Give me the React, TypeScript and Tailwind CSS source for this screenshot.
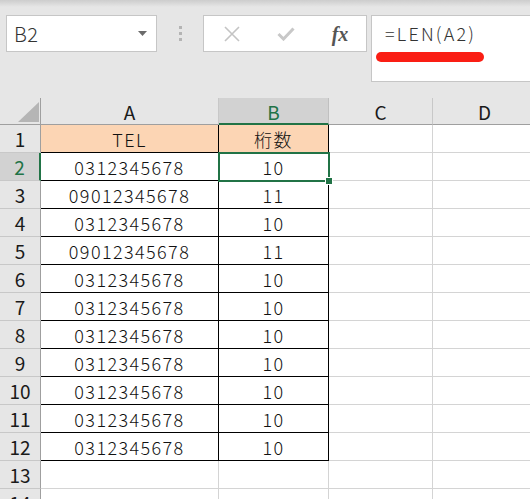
import React from "react";

const FONT = { fontFamily: '"Noto Sans CJK JP", "Noto Sans", sans-serif' };

const data: [string, string][] = [
  ["TEL", "桁数"],
  ["0312345678", "10"],
  ["09012345678", "11"],
  ["0312345678", "10"],
  ["09012345678", "11"],
  ["0312345678", "10"],
  ["0312345678", "10"],
  ["0312345678", "10"],
  ["0312345678", "10"],
  ["0312345678", "10"],
  ["0312345678", "10"],
  ["0312345678", "10"],
];

function TopBar() {
  return (
    <div className="h-[98px] bg-[#e6e6e6] flex flex-col">
      <div className="h-[7px] bg-gradient-to-b from-[#cdcdcd] to-[#e6e6e6]" />
      <div className="flex items-start mt-[8px]">
        <div className="ml-[6px] w-[151px] h-[37px] bg-white border border-[#c6c6c6] flex items-center justify-between pl-[7px] pr-[9px]">
          <span className="text-[20px] text-[#333] font-light leading-none tracking-[0.5px]">B2</span>
          <svg width="9" height="5" viewBox="0 0 9 5"><path d="M0 0 L9 0 L4.5 5 Z" fill="#6b6b6b" /></svg>
        </div>
        <div className="w-[46px] h-[37px] flex flex-col items-center justify-center gap-[3px]">
          <div className="w-[3px] h-[3px] bg-[#b4b4b4]" />
          <div className="w-[3px] h-[3px] bg-[#b4b4b4]" />
          <div className="w-[3px] h-[3px] bg-[#b4b4b4]" />
        </div>
        <div className="w-[164px] h-[37px] bg-white border border-[#c6c6c6] flex items-center">
          <div className="w-[54px] flex justify-center pl-[2px]">
            <svg width="16" height="16" viewBox="0 0 16 16"><path d="M1 1 L15 15 M15 1 L1 15" stroke="#c4c4c4" strokeWidth="1.6" /></svg>
          </div>
          <div className="w-[56px] flex justify-center">
            <svg width="18" height="14" viewBox="0 0 18 14"><path d="M1.5 7 L6.5 12 L16.5 1.5" stroke="#c8c8c8" strokeWidth="3" fill="none" /></svg>
          </div>
          <div className="w-[52px] flex justify-center">
            <span className="text-[20px] italic font-bold text-[#555] leading-none" style={{ fontFamily: '"Liberation Serif", "DejaVu Serif", serif' }}>fx</span>
          </div>
        </div>
        <div className="ml-[4px] flex-1 h-[67px] bg-white border-l border-t border-b border-[#c6c6c6] pl-[13px] pt-[5px] flex flex-col">
          <span className="text-[18px] text-[#333] font-light leading-[24px] tracking-[2.2px]">=LEN(A2)</span>
          <div className="mt-[7px] ml-[-9px] w-[108px] h-[10px] rounded-full bg-[#fa1e14]" />
        </div>
      </div>
    </div>
  );
}

function Grid() {
  const rows = Array.from({ length: 14 }, (_, i) => i + 1);
  return (
    <div className="relative">
      <div className="grid grid-cols-[41px_178px_110px_104px_104px] w-[537px]">
        <div className="h-[27px] bg-[#e6e6e6] border-r border-b border-[#9f9f9f] relative">
          <svg className="absolute left-[18px] top-[4px]" width="21" height="20" viewBox="0 0 21 20"><path d="M21 0 L21 20 L0 20 Z" fill="#b5b5b5" /></svg>
        </div>
        {["A", "B", "C", "D"].map((c) => (
          <div
            key={c}
            className={
              c === "B"
                ? "h-[27px] bg-[#d2d2d2] border-r border-[#c0c0c0] border-b-2 border-b-[#217346] flex items-center justify-center text-[19px] text-[#217346] leading-none pt-[1px]"
                : "h-[27px] bg-[#e6e6e6] border-r border-[#c8c8c8] border-b border-b-[#9f9f9f] flex items-center justify-center text-[19px] text-[#1a1a1a] leading-none"
            }
          >
            {c}
          </div>
        ))}
        {rows.map((r) => {
          const d = data[r - 1];
          const inTable = r <= 12;
          const cellCls = (hasData: boolean) =>
            "h-[28px] border-r border-b flex items-center justify-center text-[18px] font-light text-[#111] leading-none tracking-[1.4px] " +
            (hasData ? "border-black " : "border-[#d4d4d4] ");
          return (
            <React.Fragment key={r}>
              <div
                className={
                  r === 2
                    ? "h-[28px] bg-[#d2d2d2] border-b border-[#c8c8c8] border-r-2 border-r-[#217346] flex items-center justify-center text-[19px] text-[#217346] leading-none"
                    : "h-[28px] bg-[#e6e6e6] border-b border-[#c8c8c8] border-r border-r-[#9f9f9f] flex items-center justify-center text-[19px] text-[#1a1a1a] leading-none"
                }
              >
                {r}
              </div>
              <div className={cellCls(inTable) + (r === 1 ? "bg-[#fcd5b4]" : "bg-white")}>{d ? d[0] : ""}</div>
              <div className={cellCls(inTable) + (r === 1 ? "bg-[#fcd5b4]" : "bg-white")}>{d ? d[1] : ""}</div>
              <div className={cellCls(false) + "bg-white"} />
              <div className={cellCls(false) + "bg-white"} />
            </React.Fragment>
          );
        })}
      </div>
      <div className="absolute left-[218px] top-[54px] w-[112px] h-[30px] border-2 border-[#217346] pointer-events-none" />
      <div className="absolute left-[325px] top-[79px] w-[8px] h-[8px] bg-[#217346] border border-white" />
    </div>
  );
}

export default function App() {
  return (
    <div className="w-[530px] h-[499px] overflow-hidden bg-white" style={FONT}>
      <TopBar />
      <Grid />
    </div>
  );
}
